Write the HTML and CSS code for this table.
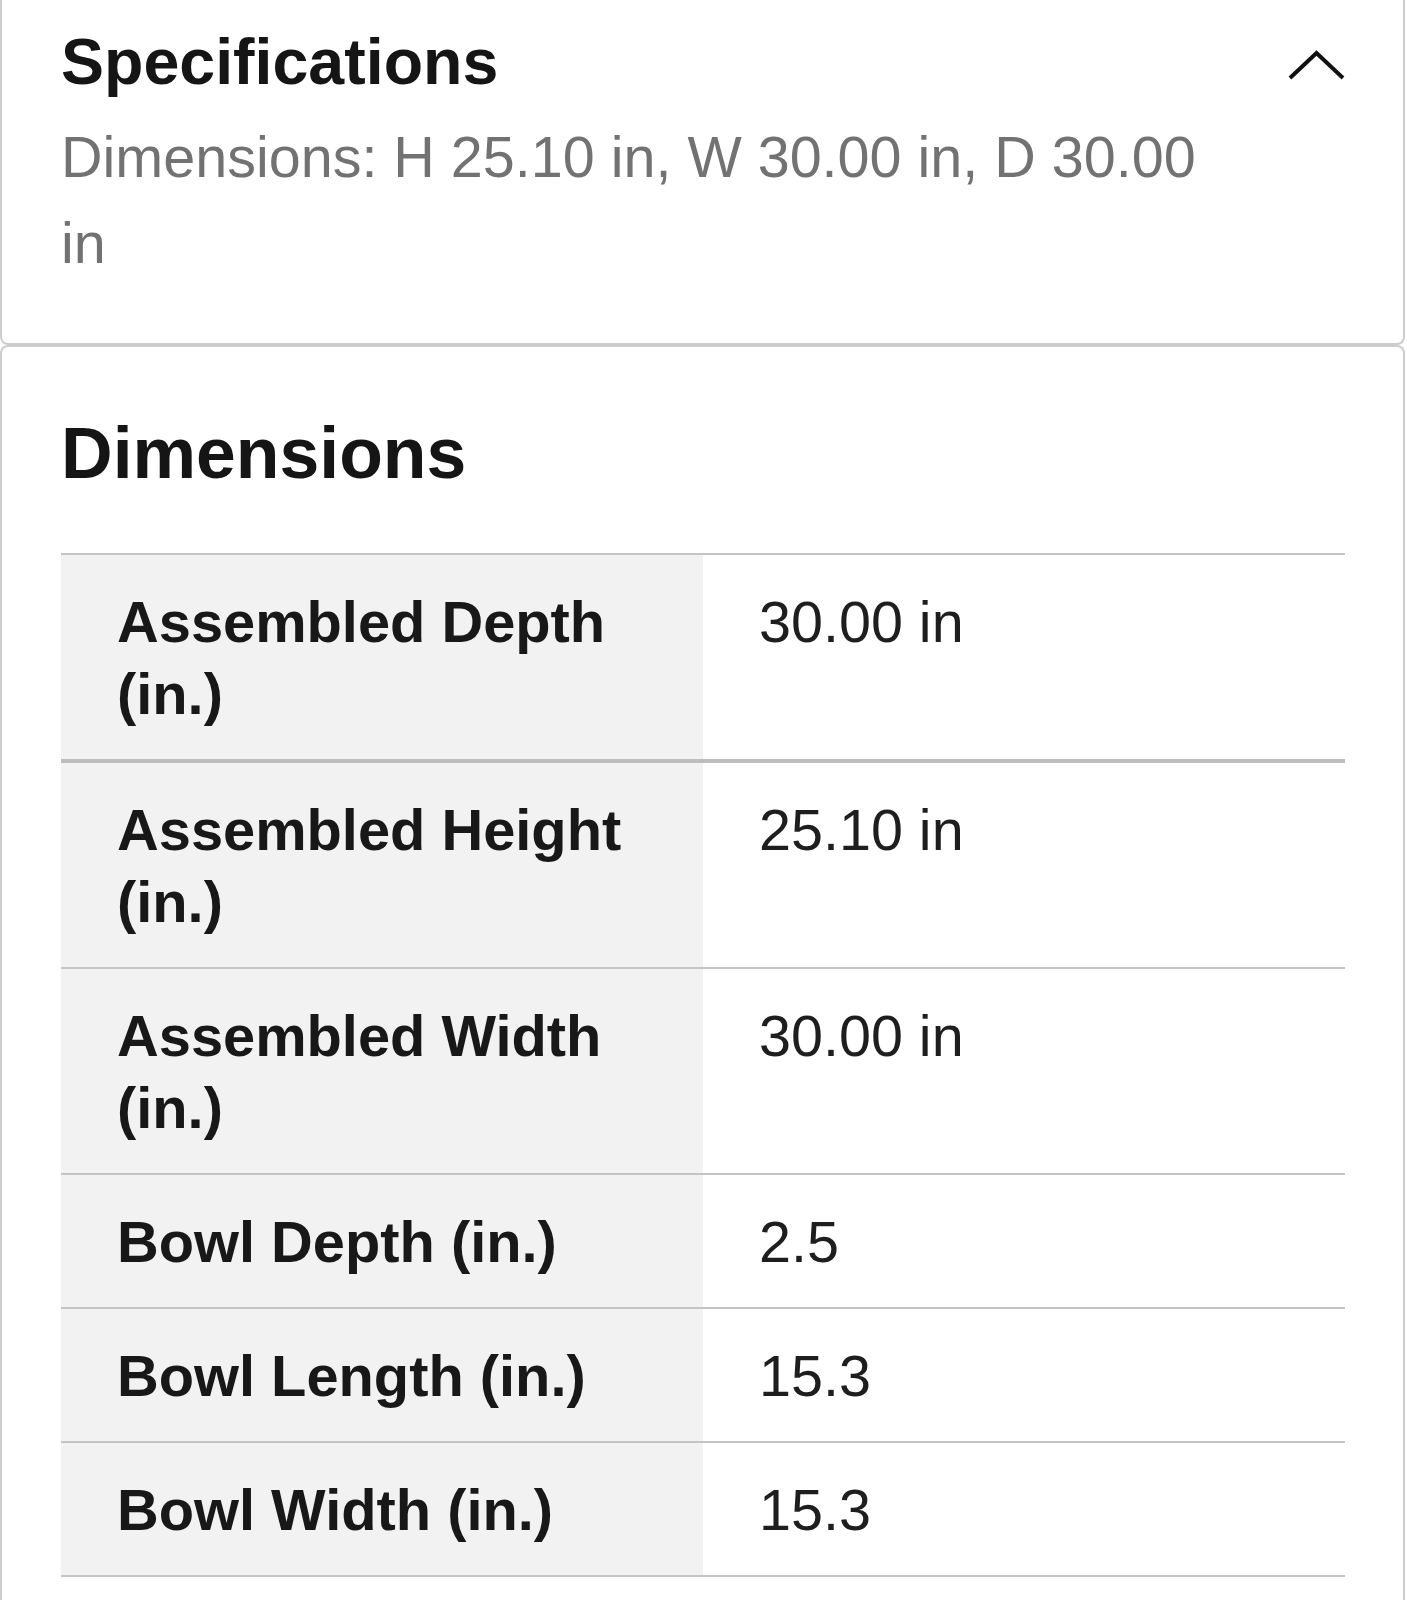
FILE: index.html
```html
<!DOCTYPE html>
<html lang="en">
<head>
<meta charset="utf-8">
<title>Specifications</title>
<link rel="stylesheet" href="styles.css">
</head>
<body>
<div class="page">
  <section class="card card-summary">
    <div class="summary">
      <div class="summary-text">
        <h2 class="title">Specifications</h2>
        <p class="desc">Dimensions: H 25.10 in, W 30.00 in, D 30.00 in</p>
      </div>
      <button class="toggle" type="button" aria-label="Collapse specifications">
        <svg width="57" height="30" viewBox="0 0 57 30" aria-hidden="true">
          <polyline points="2,28 28.5,3 55,28" fill="none" stroke="#111" stroke-width="4"/>
        </svg>
      </button>
    </div>
  </section>
  <section class="card card-detail">
    <h3 class="section-title">Dimensions</h3>
    <table class="spec-table">
      <tbody>
        <tr class="row-strong">
          <th class="spec-label">Assembled Depth (in.)</th>
          <td class="spec-value">30.00 in</td>
        </tr>
        <tr>
          <th class="spec-label">Assembled Height (in.)</th>
          <td class="spec-value">25.10 in</td>
        </tr>
        <tr>
          <th class="spec-label">Assembled Width (in.)</th>
          <td class="spec-value">30.00 in</td>
        </tr>
        <tr>
          <th class="spec-label">Bowl Depth (in.)</th>
          <td class="spec-value">2.5</td>
        </tr>
        <tr>
          <th class="spec-label">Bowl Length (in.)</th>
          <td class="spec-value">15.3</td>
        </tr>
        <tr>
          <th class="spec-label">Bowl Width (in.)</th>
          <td class="spec-value">15.3</td>
        </tr>
      </tbody>
    </table>
  </section>
</div>
</body>
</html>
```

FILE: styles.css
```css
* {
  box-sizing: border-box;
}

html, body {
  margin: 0;
  padding: 0;
  background: #ffffff;
}

body {
  font-family: "Liberation Sans", Arial, Helvetica, sans-serif;
  color: #1b1b1b;
}

.page {
  width: 1405px;
}

.card {
  border: 2px solid #cdcdcd;
  background: #ffffff;
  padding-left: 59px;
  padding-right: 58px;
}

.card-summary {
  border-top: none;
  border-radius: 0 0 8px 8px;
  padding-top: 24px;
  padding-bottom: 57px;
}

.summary {
  display: flex;
  align-items: flex-start;
  gap: 80px;
}

.summary-text {
  flex: 1;
  min-width: 0;
}

.title {
  margin: 0;
  font-size: 64.5px;
  line-height: 76px;
  font-weight: 700;
  color: #151515;
}

.desc {
  margin: 14px 0 0;
  font-size: 57.5px;
  line-height: 86px;
  color: #727272;
}

.toggle {
  flex: none;
  margin-top: 26px;
  padding: 0;
  border: 0;
  background: none;
  width: 57px;
  height: 30px;
  display: block;
}

.toggle svg {
  display: block;
}

.card-detail {
  border-bottom: none;
  border-radius: 8px 8px 0 0;
  padding-top: 64px;
  padding-bottom: 80px;
}

.section-title {
  margin: 0;
  font-size: 71.5px;
  line-height: 84px;
  font-weight: 700;
  color: #151515;
}

.spec-table {
  margin-top: 58px;
  width: 100%;
  border-collapse: separate;
  border-spacing: 0;
  border-top: 2px solid #c4c4c4;
  table-layout: fixed;
}

.spec-label,
.spec-value {
  padding: 31px 56px 29px 56px;
  font-size: 57.5px;
  line-height: 72px;
  text-align: left;
  vertical-align: top;
  border-bottom: 2px solid #c4c4c4;
}

.spec-label {
  width: 50%;
  background: #f2f2f2;
  font-weight: 700;
  font-size: 57.8px;
  color: #181818;
}

.spec-value {
  font-weight: 400;
  color: #1e1e1e;
}

.row-strong .spec-label,
.row-strong .spec-value {
  border-bottom: 4px solid #bdbdbd;
}
```
